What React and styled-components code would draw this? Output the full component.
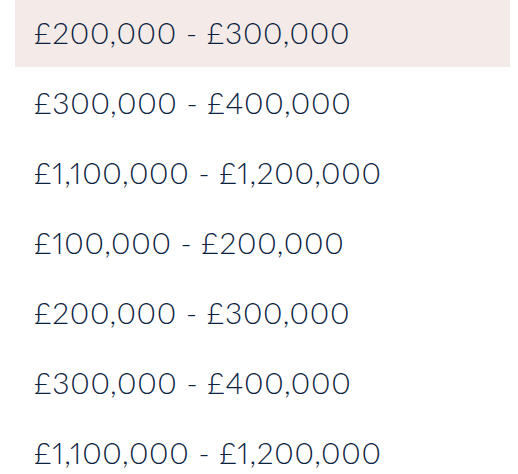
import React from "react";
import styled, { createGlobalStyle } from "styled-components";

const GlobalStyle = createGlobalStyle`
  body {
    margin: 0;
    background: #ffffff;
    font-family: Lato, "Noto Sans", sans-serif;
  }
`;

const ranges = [
  "£200,000 - £300,000",
  "£300,000 - £400,000",
  "£1,100,000 - £1,200,000",
  "£100,000 - £200,000",
  "£200,000 - £300,000",
  "£300,000 - £400,000",
  "£1,100,000 - £1,200,000",
];

const List = styled.ul`
  list-style: none;
  margin: 0;
  padding: 0 8px 0 15px;
  display: flex;
  flex-direction: column;
  gap: 3px;
`;

const Option = styled.li`
  box-sizing: border-box;
  height: 67px;
  display: flex;
  align-items: center;
  padding: 0 0 4px 19px;
  font-size: 30px;
  font-weight: 300;
  letter-spacing: 0.75px;
  font-variant-numeric: proportional-nums;
  color: #0b2140;
  background: ${(p) => (p.$active ? "#f4ebe8" : "transparent")};
  cursor: pointer;
`;

const App = () => {
  return (
    <React.Fragment>
      <GlobalStyle />
      <List>
        {ranges.map((r, i) => (
          <Option key={i} $active={i === 0}>
            {r}
          </Option>
        ))}
      </List>
    </React.Fragment>
  );
};

export default App;
